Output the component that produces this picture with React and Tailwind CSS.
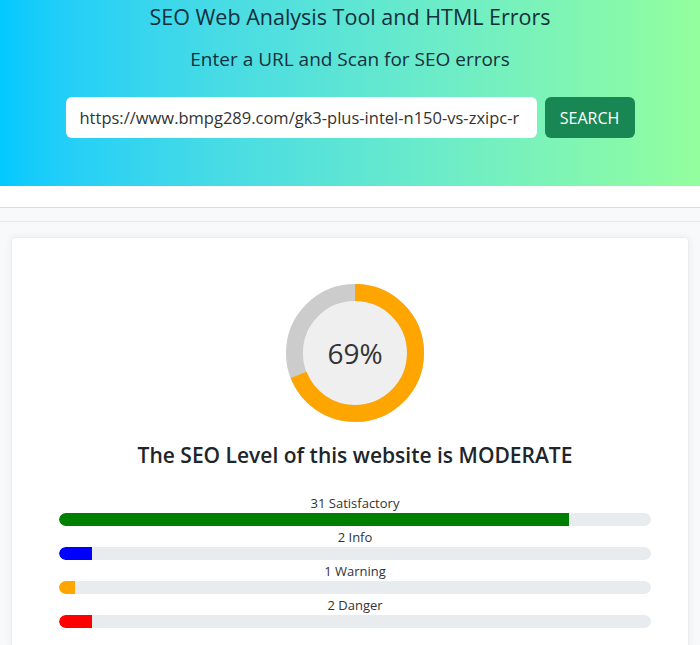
import React from 'react';

const stats = [
  { label: '31 Satisfactory', count: 31, color: 'bg-[#008000]' },
  { label: '2 Info', count: 2, color: 'bg-[#0000ff]' },
  { label: '1 Warning', count: 1, color: 'bg-[#ffa500]' },
  { label: '2 Danger', count: 2, color: 'bg-[#ff0000]' },
];

const total = stats.reduce((s, x) => s + x.count, 0);

const Donut = ({ value }) => {
  const r = 60.5;
  const c = 2 * Math.PI * r;
  return (
    <div className="relative w-[138px] h-[138px]">
      <svg width="138" height="138" viewBox="0 0 138 138">
        <circle cx="69" cy="69" r="52" fill="#efefef" />
        <circle cx="69" cy="69" r={r} fill="none" stroke="#cccccc" strokeWidth="17" />
        <circle
          cx="69"
          cy="69"
          r={r}
          fill="none"
          stroke="#ffa500"
          strokeWidth="17"
          strokeDasharray={`${(c * value) / 100} ${c}`}
          transform="rotate(-90 69 69)"
        />
      </svg>
      <div className="absolute inset-0 flex items-center justify-center text-[28px] text-[#333]">
        {value}%
      </div>
    </div>
  );
};

const App = () => {
  return (
    <div className="min-h-[645px] bg-[#f8f9fa] font-['Open_Sans',sans-serif] text-[#212529]">
      <header className="h-[186px] bg-gradient-to-r from-[#00c9ff] to-[#92fe9d] flex flex-col items-center">
        <h1 className="mt-[2px] text-[21.5px] leading-[30px] font-medium text-[#15303d]">SEO Web Analysis Tool and HTML Errors</h1>
        <h2 className="mt-[14px] text-[19px] leading-[26px] font-medium text-[#15303d]">Enter a URL and Scan for SEO errors</h2>
        <div className="mt-[25px] flex gap-[8px]">
          <input
            className="w-[471px] h-[41px] rounded-[6px] bg-white px-[14px] text-[16.5px] text-[#333] outline-none"
            defaultValue="https://www.bmpg289.com/gk3-plus-intel-n150-vs-zxipc-r"
          />
          <button className="w-[90px] h-[41px] rounded-[6px] bg-[#198754] text-white text-[16px]">SEARCH</button>
        </div>
      </header>
      <div className="h-[22px] bg-white border-b border-[#dcdcdc]" />
      <div className="h-[14px] border-b border-[#e6e6e6]" />
      <div className="px-[11px] pt-[15px]">
        <div className="bg-white rounded-[4px] border border-[#ececec] shadow-[0_0_8px_rgba(0,0,0,0.06)] pt-[46px] pb-[20px] pl-[47px] pr-[37px] flex flex-col items-center">
          <Donut value={69} />
          <h3 className="mt-[19px] text-[21px] font-semibold leading-[28px] text-[#212529]">
            The SEO Level of this website is MODERATE
          </h3>
          <div className="mt-[26px] w-full flex flex-col gap-[3px]">
            {stats.map((s) => (
              <div key={s.label} className="flex flex-col items-center">
                <div className="text-[13px] leading-[16px] text-[#333]">{s.label}</div>
                <div className="mt-[2px] w-full h-[13px] rounded-full bg-[#e9ecef] overflow-hidden">
                  <div className={`h-full rounded-l-full ${s.color}`} style={{ width: `${(s.count / total) * 100}%` }} />
                </div>
              </div>
            ))}
          </div>
        </div>
      </div>
    </div>
  );
};

export default App;
